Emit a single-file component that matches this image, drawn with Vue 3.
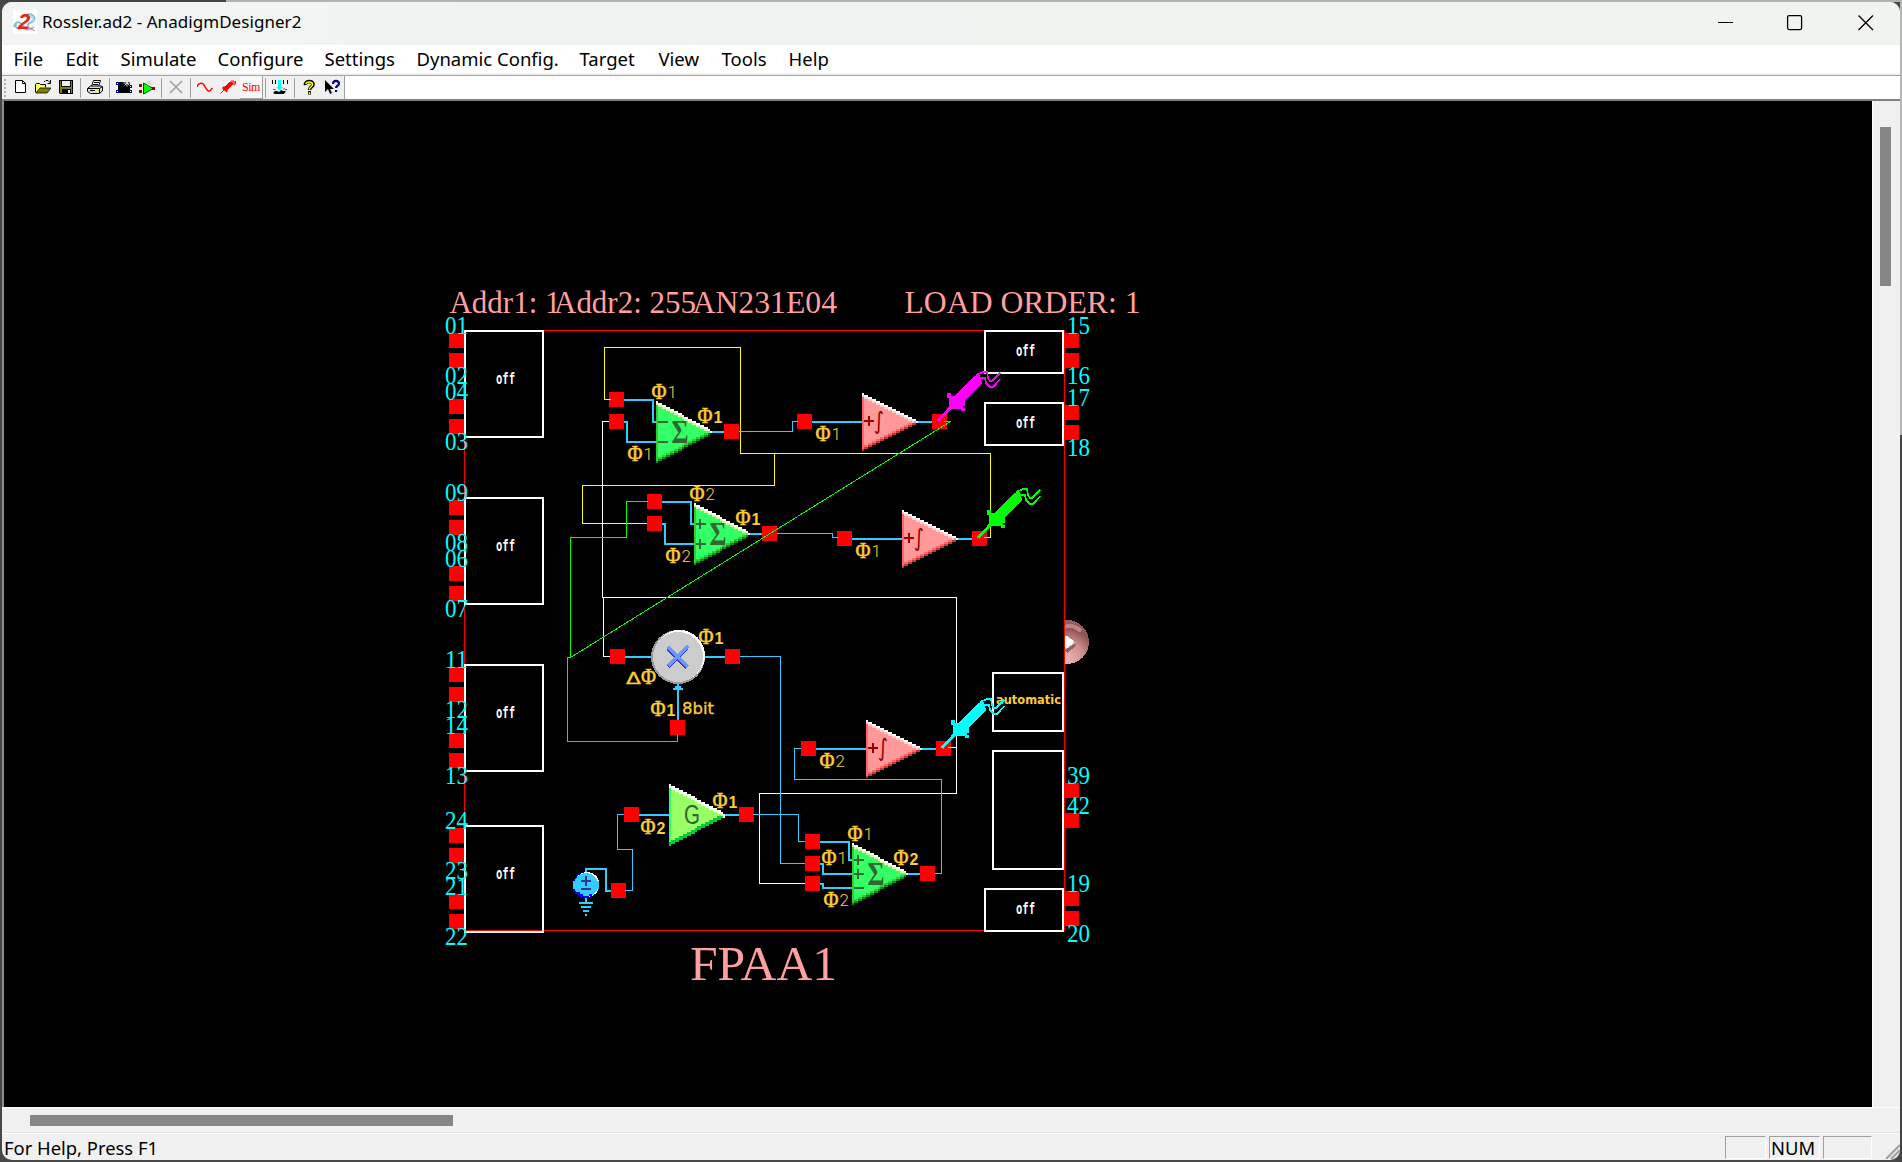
<script setup>
const menus = [
  { label: 'File', w: 52 }, { label: 'Edit', w: 55 }, { label: 'Simulate', w: 97 },
  { label: 'Configure', w: 107 }, { label: 'Settings', w: 92 }, { label: 'Dynamic Config.', w: 163 },
  { label: 'Target', w: 79 }, { label: 'View', w: 63 }, { label: 'Tools', w: 67 }, { label: 'Help', w: 60 },
]

// I/O cells on the chip border
const leftCells = [
  { y: 330, pins: ['01', '02', '04', '03'] },
  { y: 497, pins: ['09', '08', '06', '07'] },
  { y: 664, pins: ['11', '12', '14', '13'] },
  { y: 825, pins: ['24', '23', '21', '22'] },
]
const pinDy = [3, 23, 69, 89]
const labelDy = [4, 54, 70, 120]
const rightCells = [330, 402, 888]
const rightPins = [333, 353, 405, 425, 783, 813, 891, 911]
const rightLabels = [
  ['15', 334], ['16', 384], ['17', 406], ['18', 456],
  ['39', 784], ['42', 814], ['19', 892], ['20', 942],
]

// Stepped triangle used by every amplifier-like module
function triangle(x, y, rows, topBand, lowBand) {
  const top = []
  const bottom = []
  const last = rows * 4 + 2
  for (let c = 0; c < 28; c++) {
    const t = 2 * Math.floor(((c + 1) * rows) / 28)
    top.push([x + 2 * c, y + t])
    bottom.push([x + 2 * c, y + last - t])
  }
  const band = (pts, d, h) => pts.map(([a, b]) => `M${a} ${b + d}h2v${h}h-2z`).join('')
  return {
    body: top.map(([a, b], i) => `M${a} ${b}h2V${bottom[i][1]}h-2z`).join(''),
    hi: band(top, 0, topBand),
    hi2: band(top.slice(0, 26), topBand, 2),
    lo2: band(bottom.slice(0, 26), -4, 2),
    lo: band(bottom.slice(0, 27), -lowBand, lowBand),
    left: `M${x} ${y + 4}h2V${y + last - 2}h-2z`,
  }
}

const sums = [
  { x: 656, y: 401, signs: [[422, '-'], [442, '-']] },
  { x: 694, y: 503, signs: [[524, '+'], [544, '+']] },
  { x: 852, y: 843, signs: [[860, '+'], [874, '+'], [888, '-']] },
].map((s) => ({ ...s, t: triangle(s.x, s.y, 15, 2, 2) }))
const integrators = [[0, 0], [40, 117], [4, 327]].map(([dx, dy]) => ({ dx, dy }))
const intTri = triangle(862, 393, 14, 2, 2)
const gainTri = triangle(669, 784, 15, 4, 4)

const ports = [
  [609, 392], [609, 414], [724, 424], [647, 494], [647, 516], [762, 526],
  [797, 414], [932, 414], [837, 531], [972, 531], [801, 741], [936, 741],
  [610, 649], [725, 649], [670, 720], [624, 807], [739, 807], [611, 883],
  [805, 834], [805, 856], [805, 876], [920, 866],
]

// Clock phase labels: x, y of the phi, digit, heavy digit
const phases = [
  [652, 383, '1', 0], [698, 407, '1', 1], [628, 445, '1', 0],
  [690, 485, '2', 0], [736, 509, '1', 1], [666, 547, '2', 0],
  [816, 425, '1', 0], [856, 542, '1', 0], [820, 752, '2', 0],
  [699, 628, '1', 1], [651, 700, '1', 1], [641, 818, '2', 1], [713, 792, '1', 1],
  [848, 825, '1', 0], [822, 849, '1', 0], [894, 849, '2', 1], [824, 891, '2', 0],
]

const wires = [
  ['#ffff00', 'M610.5 399.5H604.5V347.5H740.5V453.5H990.5V537.5H984M774.5 453.5V485.5H582.5V523.5H647'],
  ['#ffffff', 'M609 421.5H602.5V597.5H956.5V793.5H759.5V883.5H805M603.5 597.5V656.5H610M956.5 747.5H948'],
  ['#00ff00', 'M648 501.5H626.5V537.5H570.5V657.5H567.5V741.5H677.5V734'],
  ['#33ccff', 'M739 431.5H792.5V421.5H798M777 533.5H832.5V537.5H838M740 656.5H780.5V863.5H805M753 814.5H798.5V841.5H805M934 873.5H941.5V779.5H794.5V748.5H801M625 890.5H632.5V849.5H617.5V814.5H624'],
]
const leads =
  'M624 400H653V422H656M624 422H627V442H656M711 432H724' +
  'M662 502H691V524H694M662 524H665V544H694M749 534H762' +
  'M812 422H862M917 422H932M852 539H902M957 539H972M816 749H866M921 749H936' +
  'M625 657H652M704 657H725M678 720V684' +
  'M639 815H669M723 815H739' +
  'M820 842H849V860H852M820 864H823V874H852M820 884H823V888H852M907 874H920' +
  'M586 874V869H606V891H611M586 896V902M579 903H593M581 907H591M583 911H589M585 915H587'

const probes = [
  { dx: 0, dy: 0, c: '#ff00ff' },
  { dx: 40, dy: 117, c: '#00ff00' },
  { dx: 4, dy: 327, c: '#00ffff' },
]
</script>

<template>
  <div class="desktop">
    <div class="window">
      <header class="titlebar">
        <svg class="appicon" width="24" height="24" viewBox="0 0 24 24">
          <rect width="24" height="24" fill="#fff" />
          <path d="M1 17C3 10 8 12 10 16S15 21 21 17M13 5C18 3 23 6 21 10S14 12 15 16M3 13c-1 3 0 6 4 6" fill="none" stroke="#7cc4d6" stroke-width="2" />
          <path d="M15 7c4-1 6 1 4 4" fill="none" stroke="#b7e0ea" stroke-width="2" />
          <text class="logo" x="5" y="19">2</text>
          <path d="M15 17l7 4" stroke="#ee6a62" stroke-width="1" />
        </svg>
        <span class="title">Rossler.ad2 - AnadigmDesigner2</span>
        <svg class="controls" width="160" height="18" viewBox="0 0 160 18">
          <path d="M4 8.5h15" stroke="#000" />
          <rect x="73.6" y="1.6" width="14" height="14" rx="1.5" fill="none" stroke="#000" stroke-width="1.3" />
          <path d="M144.500 1.500l14.500 14.500M159 1.500L144.500 16" stroke="#000" stroke-width="1.300" />
        </svg>
      </header>

      <nav class="menubar">
        <span v-for="m in menus" :key="m.label" class="menu" :style="{ width: m.w + 'px' }">{{ m.label }}</span>
      </nav>

      <div class="toolrow">
        <div class="toolbar">
          <i class="grip"></i>
          <button><svg viewBox="0 0 16 16"><path d="M3.500 1.500h7l3 3v9h-10zM10.500 1.500v3h3" fill="#fff" stroke="#000" /></svg></button>
          <button><svg viewBox="0 0 16 16">
            <path d="M1 5h4l1 1h5v3H5l-4 5z" fill="#ffff66" /><path d="M.5 13.500V5.500l1-1h3l1 1h5v3" fill="none" stroke="#000" />
            <path d="M1 14l4-5h11l-4 5z" fill="#808000" stroke="#000" stroke-width=".8" /><path d="M9 2.500h1l1-1h2l2 2M15.500 1v3.500h-3" fill="none" stroke="#000" />
          </svg></button>
          <button><svg viewBox="0 0 16 16"><path d="M1 1h14v14H2l-1-1z" fill="#000" /><path d="M2 2h1v6h10V2h1v12H2z" fill="#808000" /><path d="M4 2h8v5H4z" fill="#eee" /><path d="M4 10h9v5H4z" fill="#000" /><path d="M10 11h2v3h-2z" fill="#eee" /></svg></button>
          <i class="sep"></i>
          <button><svg viewBox="0 0 16 16"><path d="M4.500 7.500l2-6h7l-2 6" fill="#fff" stroke="#000" /><path d="M7 3.500h5M6 5.500h5" stroke="#000" /><path d="M.5 9.500l3-2.500h11l1 1v4l-3 2.500h-9l-3-2z" fill="#ddd" stroke="#000" /><path d="M1 9.500h11.500V14M12.500 9.500l3-2M3 11.500h8" stroke="#000" fill="none" /><path d="M8 11h3v1H8z" fill="#ff0" /></svg></button>
          <i class="sep"></i>
          <button><svg viewBox="0 0 16 16"><path d="M2 3h12v11H2z" fill="#000" /><path d="M0 3h3v3H0zM0 11h3v3H0zM13 6h3v3h-3zM13 11h3v3h-3z" fill="#000080" /><path d="M1 4h1v1H1zM1 12h1v1H1zM14 7h1v1h-1zM14 12h1v1h-1z" fill="#fff" /><path d="M11 .5v7M7.500 4h7M8.500 1.500l5 5M13.500 1.500l-5 5" stroke="#d8d8d8" /></svg></button>
          <button><svg viewBox="0 0 16 16"><path d="M4.500 4v11l10-5.500z" fill="#00ff00" stroke="#005000" /><path d="M0 5h3v3H0zM0 11h3v3H0zM13 8h3v3h-3z" fill="#990000" /><path d="M10 .5v7M6.500 4h7M7.500 1.500l5 5M12.500 1.500l-5 5" stroke="#d4d4d4" /></svg></button>
          <i class="sep"></i>
          <button><svg viewBox="0 0 16 16"><path d="M2 2l12 12M14 2L2 14" stroke="#a0a0a0" stroke-width="1.600" /></svg></button>
          <i class="sep"></i>
          <button><svg viewBox="0 0 16 16"><path d="M0 8C1 4 5 3 7 6S10 13 13 12L15.500 9" fill="none" stroke="#f00" stroke-width="1.400" /></svg></button>
          <button><svg viewBox="0 0 16 16"><path d="M.5 14.500l4-4M3 8h2l5-5 3 1-1 2-5 5v2L3 10z" fill="#f00" stroke="#f00" /><path d="M11 2l3 0 0 4 1.500-1V2" fill="none" stroke="#f00" /></svg></button>
          <button class="raised"><span class="sim">Sim</span></button>
          <i class="sep"></i>
          <button><svg viewBox="0 0 16 16"><path d="M.5 1v4M3.500 1v4M11.500 1v4M15.500 1v4" stroke="#000" fill="none" /><path d="M6 1h3v7h2l-3.500 3.500L4 8h2z" fill="#00ffff" /><path d="M1 14l2-2h2l2 1 2-2 2 1h3l-2 3H3z" fill="#000" /><path d="M3 10v1M12 9v2M1 10.500h2M13 10.500h2" stroke="#555" /></svg></button>
          <i class="sep"></i>
          <button><svg viewBox="0 0 16 16"><path d="M4.500 6C3.500 2 12 1 12 5.500 12 8 8.500 7.500 8.500 11" fill="none" stroke="#000" stroke-width="3.600" /><path d="M7 12h3v3.500H7z" fill="#000" /><path d="M5 5C5 2.500 11.500 2 11.500 5.500 11.500 8 8.500 7.500 8.500 10.500M8.500 13v2" fill="none" stroke="#ff0" stroke-width="1.500" /></svg></button>
          <button><svg viewBox="0 0 16 16"><path d="M1 1v12l3-3 2 5 2-1-2-4h4z" fill="#000" /><path d="M9 5c0-4 6-4 6-.5 0 2.500-3 2-3 4.500M12 11v2" fill="none" stroke="#000080" stroke-width="2.200" /></svg></button>
        </div>
      </div>

      <main class="workspace">
        <svg class="canvas" viewBox="4 101 1868 1006" width="1868" height="1006" shape-rendering="crispEdges">
          <defs>
            <radialGradient id="ball" cx="0.45" cy="0.9" r="0.95">
              <stop offset="0" stop-color="#efb9b9" />
              <stop offset="0.45" stop-color="#cc9090" />
              <stop offset="0.75" stop-color="#8e5454" />
              <stop offset="1" stop-color="#9a6464" />
            </radialGradient>
            <clipPath id="ballClip"><rect x="1065" y="610" width="40" height="64" /></clipPath>
          </defs>

          <g class="heading">
            <text x="449.500" y="313" textLength="111" lengthAdjust="spacingAndGlyphs">Addr1: 1</text>
            <text x="554" y="313" textLength="142" lengthAdjust="spacingAndGlyphs">Addr2: 255</text>
            <text x="692.500" y="313" textLength="144.500" lengthAdjust="spacingAndGlyphs">AN231E04</text>
            <text x="904.500" y="313" textLength="236" lengthAdjust="spacingAndGlyphs">LOAD ORDER: 1</text>
            <text class="chipname" x="690" y="980" textLength="147" lengthAdjust="spacingAndGlyphs">FPAA1</text>
          </g>

          <rect x="464.5" y="330.5" width="600" height="600" fill="none" stroke="#f00" />

          <g v-for="c in leftCells" :key="c.y">
            <rect v-for="d in pinDy" :key="d" x="449" :y="c.y + d" width="15" height="15" fill="#f00" />
            <rect x="465" :y="c.y + 1" width="78" height="106" fill="none" stroke="#fff" stroke-width="2" />
            <text class="cell" x="496" :y="c.y + 54" textLength="19" lengthAdjust="spacingAndGlyphs">off</text>
            <text v-for="(p, i) in c.pins" :key="p" class="pin" x="445" :y="c.y + labelDy[i]" textLength="23" lengthAdjust="spacingAndGlyphs">{{ p }}</text>
          </g>

          <rect v-for="y in rightPins" :key="y" x="1064" :y="y" width="15" height="15" fill="#f00" />
          <g v-for="y in rightCells" :key="'c' + y">
            <rect x="985" :y="y + 1" width="78" height="42" fill="none" stroke="#fff" stroke-width="2" />
            <text class="cell" x="1016" :y="y + 26" textLength="19" lengthAdjust="spacingAndGlyphs">off</text>
          </g>
          <rect x="993" y="673" width="70" height="58" fill="none" stroke="#fff" stroke-width="2" />
          <rect x="993" y="751" width="70" height="118" fill="none" stroke="#fff" stroke-width="2" />
          <text v-for="l in rightLabels" :key="l[0]" class="pin" x="1067" :y="l[1]" textLength="23" lengthAdjust="spacingAndGlyphs">{{ l[0] }}</text>

          <g clip-path="url(#ballClip)">
            <circle cx="1067" cy="642" r="22" fill="url(#ball)" />
            <path d="M1062 628q10-5 19 3" fill="none" stroke="#b88686" stroke-width="4" />
            <path d="M1065 650l10-6 1 2-9 7z" fill="#8a6060" />
            <path d="M1065 636h2l8 6-8 6h-2z" fill="#fff" />
          </g>

          <path :d="leads" fill="none" stroke="#33ccff" stroke-width="2" />
          <path d="M677 684h2v2h2v2h2v2h-10v-2h2v-2h2z" fill="#33ccff" />
          <rect v-for="(p, i) in ports" :key="i" :x="p[0]" :y="p[1]" width="15" height="15" fill="#f00" />
          <path v-for="w in wires" :key="w[0]" :d="w[1]" fill="none" :stroke="w[0]" />

          <g v-for="s in sums" :key="'s' + s.x">
            <path :d="s.t.body" fill="#33ff66" />
            <path :d="s.t.left" fill="#33cc33" />
            <path :d="s.t.lo2" fill="#33cc33" />
            <path :d="s.t.lo" fill="#009900" />
            <path :d="s.t.hi2" fill="#ccff99" />
            <path :d="s.t.hi" fill="#fff" />
            <text class="sigma" :x="s.x + 15.500" :y="s.y + 42" textLength="17" lengthAdjust="spacingAndGlyphs">Σ</text>
            <path v-for="g in s.signs" :key="g[0]" :d="`M${s.x + 2} ${g[0]}h10` + (g[1] === '+' ? `m-6 -5v10` : '')" stroke="#336633" stroke-width="2" />
          </g>

          <g v-for="n in integrators" :key="'i' + n.dx" :transform="`translate(${n.dx} ${n.dy})`">
            <path :d="intTri.body" fill="#ff9999" />
            <path :d="intTri.left" fill="#ff6666" />
            <path :d="intTri.lo2" fill="#ff6666" />
            <path :d="intTri.lo" fill="#cc3333" />
            <path :d="intTri.hi2" fill="#ffcccc" />
            <path :d="intTri.hi" fill="#fff" />
            <path d="M864 421h10M869 416v10" stroke="#990000" stroke-width="2" />
            <text class="integral" x="874" y="429" textLength="10" lengthAdjust="spacingAndGlyphs">∫</text>
          </g>

          <path :d="gainTri.body" fill="#99ff66" />
          <path :d="gainTri.left" fill="#33ff66" />
          <path :d="gainTri.lo" fill="#00cc33" />
          <path :d="gainTri.hi" fill="#fff" />
          <text class="gain" x="684" y="824" textLength="16" lengthAdjust="spacingAndGlyphs">G</text>

          <circle cx="678" cy="657" r="27" fill="#999" />
          <circle cx="679.500" cy="655.500" r="25.500" fill="#fff" />
          <circle cx="678" cy="657" r="25" fill="#ccc" />
          <path d="M668 649l19 19M668 667l19-19" stroke="#3333cc" stroke-width="3" />
          <path d="M668 647l20 20M668 666l20-20" stroke="#6699ff" stroke-width="3" />
          <text class="label" x="626" y="684" textLength="15" lengthAdjust="spacingAndGlyphs">Δ</text>
          <text class="phi" x="641" y="684" textLength="15" lengthAdjust="spacingAndGlyphs">Φ</text>
          <text class="label" x="682" y="714" textLength="32" lengthAdjust="spacingAndGlyphs">8bit</text>

          <circle cx="586" cy="885" r="13" fill="#0000ff" />
          <circle cx="587" cy="884.500" r="12.500" fill="#fff" />
          <circle cx="586" cy="885" r="12" fill="#33ccff" />
          <path d="M573 881h4v8h-4zM595 881h4v8h-4z" fill="#33ccff" />
          <path d="M577 892h3v2h3v2h6v-2h3v2h-3v2h-6v-2h-4v-2h-2z" fill="#0000ff" />
          <path d="M581 881h10M586 876v10M581 889h10" stroke="#333399" stroke-width="2" />

          <g v-for="(p, i) in phases" :key="'p' + i">
            <text class="phi" :x="p[0] - 0.500" :y="p[1] + 16" textLength="15" lengthAdjust="spacingAndGlyphs">Φ</text>
            <text :class="p[3] ? 'heavy' : 'thin'" :x="p[0] + 15.500" :y="p[1] + (p[3] ? 16 : 15)">{{ p[2] }}</text>
          </g>

          <path d="M570.5 657.5L950.5 421.500H944" fill="none" stroke="#0f0" />

          <text class="auto" x="996" y="704" textLength="65" lengthAdjust="spacingAndGlyphs">automatic</text>

          <g v-for="p in probes" :key="p.c" :transform="`translate(${p.dx} ${p.dy})`" :fill="p.c" :stroke="p.c">
            <path d="M938 421L950 408" fill="none" stroke-width="3" />
            <path d="M947 393h4v3h4L974 376l6-1 2 8L965 400v6h-2v2h2v3h-4v-2H949V398h-2z" stroke="none" />
            <path d="M976 375l7-3h4l1 6 2 3h2l8-8M981 378h4l1 5 4 4h3l3-3 4-5" fill="none" stroke-width="1.600" />
          </g>
        </svg>
        <aside class="vscroll"><div class="vthumb"></div></aside>
      </main>

      <div class="hscroll"><div class="hthumb"></div></div>

      <footer class="status">
        <span class="hint">For Help, Press F1</span>
        <span class="pane p1"></span>
        <span class="pane p2">NUM</span>
        <span class="pane p3"></span>
        <svg class="resize" width="15" height="15" viewBox="0 0 15 15"><path d="M1 15L15 1M6 15l9-9M11 15l4-4" stroke="#a0a0a0" stroke-width="2.200" /></svg>
      </footer>
    </div>
  </div>
</template>

<style>
html, body { margin: 0; overflow: hidden; }
</style>

<style scoped>
.desktop {
  box-sizing: border-box;
  width: 1902px;
  height: 1162px;
  padding: 2px;
  background:
    linear-gradient(90deg, #444 226px, #b1b3b1 226px) 0 0 / 1902px 2px no-repeat,
    linear-gradient(#b5b7b5 435px, #444 435px) 1900px 0 / 2px 1162px no-repeat,
    #484848;
  font-family: "Noto Sans", "Open Sans", sans-serif;
  color: #000;
}
.window {
  display: flex;
  flex-direction: column;
  width: 1898px;
  height: 1158px;
  border-radius: 10px;
  overflow: hidden;
  background: #f0f0f0;
}
.titlebar {
  display: flex;
  align-items: center;
  height: 43px;
  flex: none;
  background: linear-gradient(90deg, #f3f3f3 0%, #f1f3f3 30%, #f1f3ef 100%);
}
.appicon { margin-left: 11px; margin-top: -3px; }
.logo { font: italic bold 22px "Liberation Sans", sans-serif; fill: #e8221c; }
.title { margin-left: 5px; margin-top: -4px; font-size: 17px; letter-spacing: 0.050px; white-space: nowrap; }
.controls { margin-left: auto; margin-right: 26px; margin-top: -2px; }
.menubar {
  display: flex;
  align-items: center;
  height: 28px;
  flex: none;
  padding-left: 11.500px;
  background: #fff;
  border-bottom: 2px solid #f0f0f0;
}
.menu { flex: none; font-size: 18.500px; line-height: 28px; white-space: nowrap; }
.toolrow {
  display: flex;
  box-sizing: border-box;
  height: 26px;
  flex: none;
  background: #fff;
  border-top: 1px solid #a0a0a0;
  border-bottom: 2px solid #808080;
}
.toolbar { display: flex; width: 342px; background: #f0f0f0; border-right: 1px solid #a0a0a0; }
.grip { flex: none; width: 2px; margin: 3px 3px 2px 2px; background: repeating-linear-gradient(#b0b0b0 0 2px, transparent 2px 4px); }
.sep { flex: none; width: 1px; margin: 2px 3px 1px 2px; background: #a0a0a0; }
.toolbar button {
  box-sizing: border-box;
  display: flex;
  flex: none;
  align-items: flex-start;
  width: 23px;
  height: 23px;
  padding: 3px 0 0 3px;
  border: 0;
  background: none;
}
.toolbar button svg { width: 16px; height: 16px; flex: none; }
.toolbar .raised { background: #f7f7f7; border-right: 1px solid #a0a0a0; border-bottom: 1px solid #a0a0a0; padding: 4px 0 0 2px; }
.sim { font: 12px/14px "Liberation Serif", serif; color: #f00; letter-spacing: -0.5px; }
.workspace { display: flex; flex: none; height: 1006px; }
.canvas { display: block; margin-left: 0; background: #000; border-left: 2px solid #8c8c8c; }
.vscroll { box-sizing: border-box; width: 26px; border-left: 1px solid #fff; padding: 26px 0 0 7px; }
.vthumb { width: 11px; height: 159px; background: #868686; }
.hscroll { box-sizing: border-box; height: 26px; flex: none; margin-left: 2px; border-top: 1px solid #fff; border-bottom: 1px solid #e0e0e0; padding: 7px 0 0 26px; }
.hthumb { width: 423px; height: 11px; background: #868686; }
.status {
  display: flex;
  box-sizing: border-box;
  height: 27px;
  flex: none;
  border-top: 1px solid #fff;
  padding-left: 2px;
  font-size: 18.400px;
}
.hint { flex: none; width: 1721px; line-height: 28px; white-space: nowrap; }
.pane { flex: none; box-sizing: border-box; height: 23px; margin: 2px 3px 0 0; border: 1px solid #a0a0a0; border-right-color: #fff; border-bottom-color: #fff; line-height: 22px; }
.p1 { width: 41px; }
.p2 { width: 51px; padding-left: 1px; }
.p3 { width: 49px; }
.resize { margin-left: auto; margin-top: 10px; }

.canvas text { white-space: pre; }
.heading text { font: 32px "Liberation Serif", serif; fill: #ff9f9f; }
.heading .chipname { font-size: 48px; }
.pin { font: 25px "Liberation Serif", serif; fill: #00ffff; }
.cell { font: bold 15.500px "DejaVu Sans Mono", monospace; fill: #fff; }
.phi { font: 24px "Liberation Serif", serif; fill: #ffcc33; stroke: #ffcc33; stroke-width: 0.6; }
.thin { font: 300 17px Roboto, "Liberation Sans", sans-serif; fill: #ffcc33; }
.heavy { font: bold 16px "Liberation Sans", sans-serif; fill: #ffcc33; }
.label { font: 16.500px "DejaVu Sans", sans-serif; fill: #ffcc33; stroke: #ffcc33; stroke-width: 0.3; }
.auto { font: bold 13px "DejaVu Sans", sans-serif; fill: #ffcc33; }
.sigma { font: bold 33px "Liberation Serif", serif; fill: #336633; }
.integral { font: 24px "DejaVu Sans", sans-serif; fill: #990000; }
.gain { font: 27px "Liberation Sans", sans-serif; fill: #336633; }
</style>
